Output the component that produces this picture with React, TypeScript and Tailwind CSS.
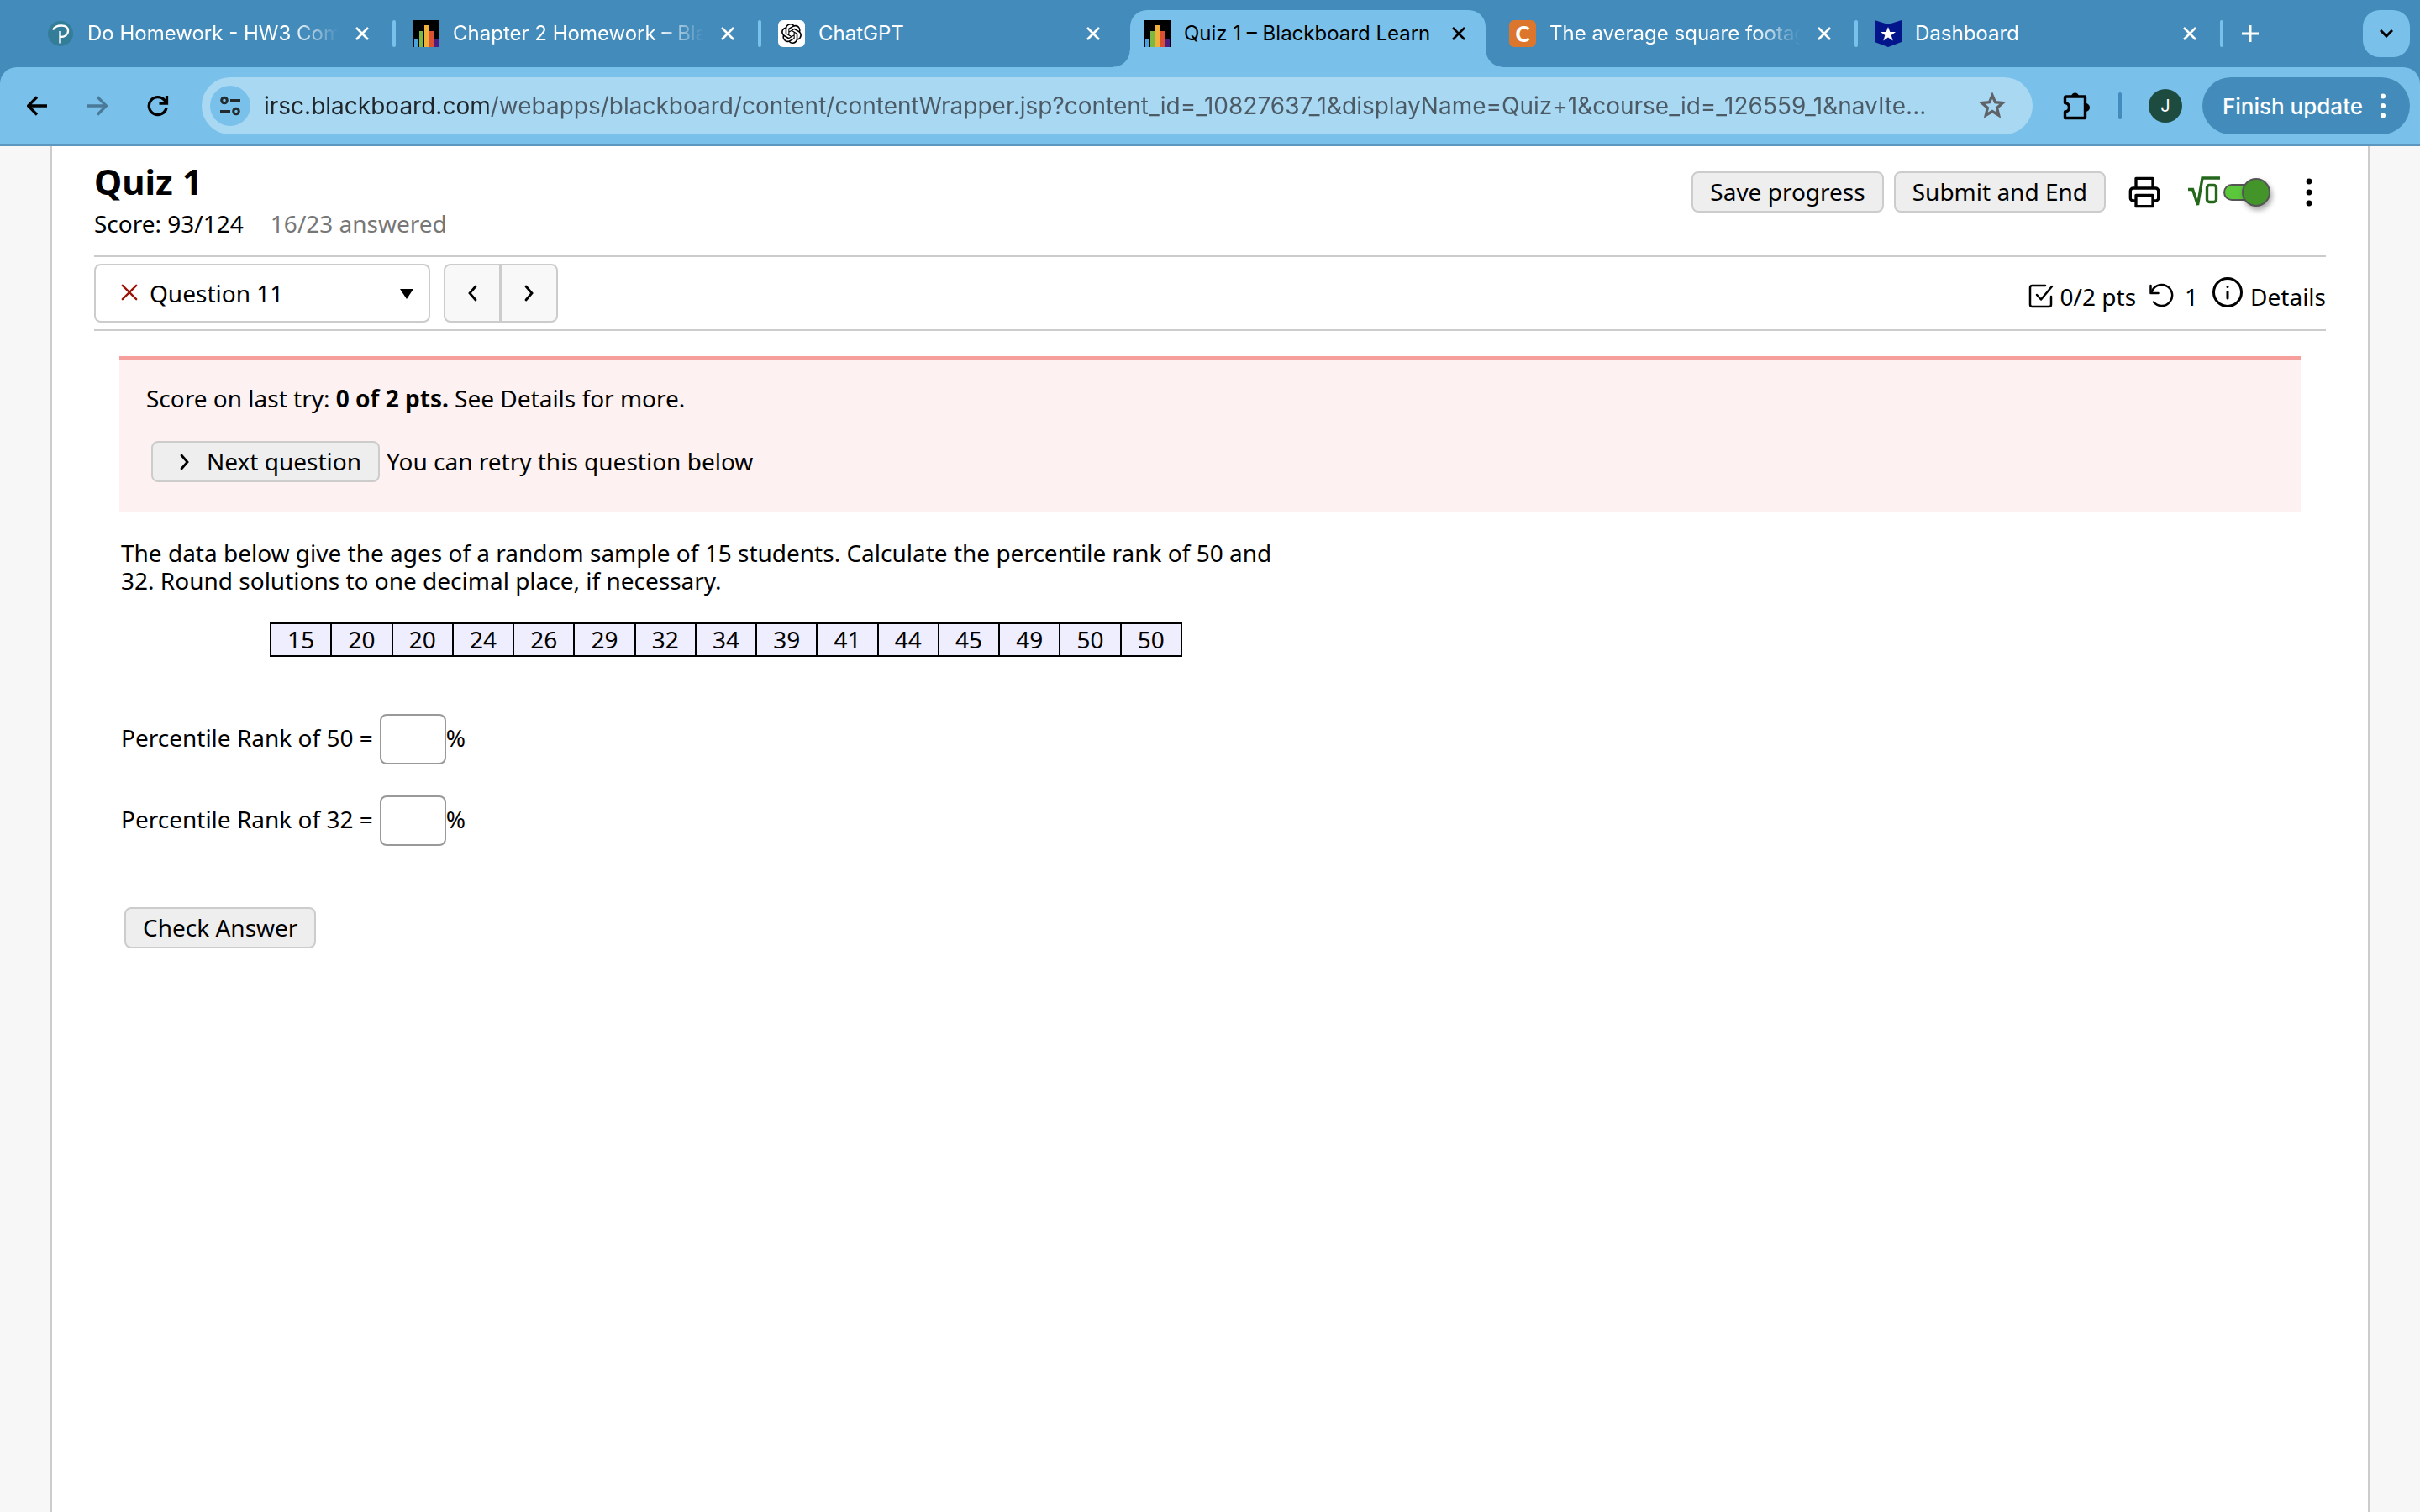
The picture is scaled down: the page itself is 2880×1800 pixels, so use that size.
import React, { useState } from "react";
import { SiOpenai } from "react-icons/si";

/* ---------- favicons ---------- */

function PearsonIcon() {
  return (
    <svg viewBox="0 0 32 32" className="size-8 shrink-0" aria-hidden="true">
      <circle cx="16" cy="16" r="15" fill="#347d99" />
      <path
        d="M7 11.500C9 7.500 13 6.500 17 6.500c5 0 8 2.500 8 6.500s-3.500 7-9.500 7M15.500 13v14.500"
        fill="none"
        stroke="#fff"
        strokeWidth="2.400"
      />
    </svg>
  );
}

function BarsIcon() {
  return (
    <svg viewBox="0 0 32 32" className="size-8 shrink-0" aria-hidden="true">
      <rect width="32" height="32" fill="#000" />
      <rect x="2" y="22" width="5" height="10" fill="#4aa3e0" />
      <rect x="8" y="13" width="5" height="19" fill="#7db942" />
      <rect x="14" y="6" width="5" height="26" fill="#f0b13a" />
      <rect x="20" y="13" width="5" height="19" fill="#dc4f33" />
      <rect x="26" y="22" width="5" height="10" fill="#4c1d80" />
    </svg>
  );
}

function ChatIcon() {
  return (
    <span className="flex size-8 shrink-0 items-center justify-center rounded-md bg-white text-black">
      <SiOpenai className="size-6" />
    </span>
  );
}

function CengageIcon() {
  return (
    <span className="flex size-8 shrink-0 items-center justify-center rounded-md bg-[#dc762c] font-['Lato',sans-serif] text-[26px] leading-8 font-black text-white">
      C
    </span>
  );
}

function StarFlagIcon() {
  return (
    <svg viewBox="0 0 32 32" className="size-8 shrink-0" aria-hidden="true">
      <path d="M0 0l16 5L32 0v26l-16 6L0 26z" fill="#03158b" />
      <path d="M16 8l2.300 6H25l-5.300 4 2 6.500L16 20.600l-5.700 3.900 2-6.500L7 14h6.700z" fill="#fff" />
    </svg>
  );
}

/* ---------- line icons ---------- */

function CloseIcon() {
  return (
    <svg viewBox="0 0 16 16" className="size-4" fill="none" stroke="currentColor" strokeWidth="2.600" aria-hidden="true">
      <path d="M1 1l14 14M15 1L1 15" />
    </svg>
  );
}

function Chevron({ left = false, className = "" }: { left?: boolean; className?: string }) {
  return (
    <svg viewBox="0 0 12 20" className={"h-5 w-3 " + className} fill="none" stroke="currentColor" strokeWidth="2.800" strokeLinecap="round" aria-hidden="true">
      <path d={left ? "M10 2L3 10l7 8" : "M2 2l7 8-7 8"} />
    </svg>
  );
}

function BackIcon({ forward = false }: { forward?: boolean }) {
  return (
    <svg viewBox="0 0 24 24" className="size-6" fill="none" stroke="currentColor" strokeWidth="3.300" aria-hidden="true">
      <path d={forward ? "M0 12h22M12 1.500L22.500 12 12 22.500" : "M24 12H2M12 1.500L1.500 12 12 22.500"} />
    </svg>
  );
}

function ReloadIcon() {
  return (
    <svg viewBox="0 0 26 26" className="size-[26px]" fill="none" stroke="currentColor" strokeWidth="3.300" aria-hidden="true">
      <path d="M23 15.500A10.500 10.500 0 1 1 21 6.500L23 9M23.500 1v9H14.500" />
    </svg>
  );
}

function SiteInfoIcon() {
  return (
    <svg viewBox="0 0 24 24" className="size-6" fill="none" stroke="#222a2e" strokeWidth="3" aria-hidden="true">
      <circle cx="5" cy="5.500" r="3.300" />
      <path d="M12 5.500h12M0 18.500h12" />
      <circle cx="19" cy="18.500" r="3.300" />
    </svg>
  );
}

function StarIcon() {
  return (
    <svg viewBox="0 0 40 40" className="size-10" fill="none" stroke="currentColor" strokeWidth="3.300" aria-hidden="true">
      <path d="M20 7.500l3.500 8.200 8.900.8-6.800 5.900 2.100 8.800-7.700-4.700-7.700 4.700 2.100-8.800-6.800-5.900 8.900-.8z" />
    </svg>
  );
}

function PuzzleIcon() {
  return (
    <svg viewBox="0 0 34 34" className="size-[34px]" aria-hidden="true">
      <path
        d="M4 6h22.500v25.500H2.500V24c3 0 5-2 5-5s-2-5.500-5-5.500V7.500A1.500 1.500 0 0 1 4 6z"
        fill="none"
        stroke="#000"
        strokeWidth="3.400"
        strokeLinejoin="round"
      />
      <path d="M10 6a4.500 4.500 0 0 1 9 0zM27 14a4.800 4.800 0 0 1 0 10z" fill="#000" />
    </svg>
  );
}

function Dots({ className }: { className: string }) {
  return (
    <svg viewBox="0 0 8 34" className={className} fill="currentColor" aria-hidden="true">
      <circle cx="4" cy="4" r="3.400" />
      <circle cx="4" cy="17" r="3.400" />
      <circle cx="4" cy="30" r="3.400" />
    </svg>
  );
}

function PrinterIcon() {
  return (
    <svg viewBox="0 0 24 24" className="size-10" fill="none" stroke="currentColor" strokeWidth="2" strokeLinejoin="round" aria-hidden="true">
      <path d="M6 9V2h12v7" />
      <path d="M6 18H4a2 2 0 0 1-2-2v-5a2 2 0 0 1 2-2h16a2 2 0 0 1 2 2v5a2 2 0 0 1-2 2h-2" />
      <path d="M6 14h12v8H6z" />
    </svg>
  );
}

function RootIcon() {
  return (
    <svg viewBox="0 0 38 38" className="size-[38px]" fill="none" stroke="#25681c" strokeWidth="3.400" aria-hidden="true">
      <path d="M0 15.500h5.500L11.500 34 17 2h21" />
      <rect x="22.500" y="10.500" width="11" height="20" rx="3" />
    </svg>
  );
}

function CheckBoxIcon() {
  return (
    <svg viewBox="0 0 30 30" className="size-[30px]" fill="none" stroke="currentColor" strokeWidth="2.500" strokeLinecap="round" strokeLinejoin="round" aria-hidden="true">
      <path d="M20 3H4.500A2.500 2.500 0 0 0 2 5.500v20A2.500 2.500 0 0 0 4.500 28h20a2.500 2.500 0 0 0 2.500-2.500V16" />
      <path d="M10 14l5 5.500L28 4" />
    </svg>
  );
}

function RetryIcon() {
  return (
    <svg viewBox="0 0 30 30" className="size-[30px]" fill="none" stroke="currentColor" strokeWidth="2.500" strokeLinecap="round" strokeLinejoin="round" aria-hidden="true">
      <path d="M1.500 3v9h9" />
      <path d="M2.500 11.500A12.500 12.500 0 1 1 5 22.500" />
    </svg>
  );
}

function InfoIcon() {
  return (
    <svg viewBox="0 0 38 38" className="size-[38px]" fill="none" stroke="currentColor" strokeWidth="3" strokeLinecap="round" aria-hidden="true">
      <circle cx="19" cy="19" r="16.500" />
      <path d="M19 18.500v7.500M19 12.500v0" />
    </svg>
  );
}

/* ---------- browser chrome ---------- */

type TabData = { title: string; icon: React.ReactNode; active?: boolean; cut?: boolean };

const tabs: TabData[] = [
  { title: "Do Homework - HW3 Com", icon: <PearsonIcon />, cut: true },
  { title: "Chapter 2 Homework – Bla", icon: <BarsIcon />, cut: true },
  { title: "ChatGPT", icon: <ChatIcon /> },
  { title: "Quiz 1 – Blackboard Learn", icon: <BarsIcon />, active: true },
  { title: "The average square footag", icon: <CengageIcon />, cut: true },
  { title: "Dashboard", icon: <StarFlagIcon /> },
];

function Tab({ tab, divider }: { tab: TabData; divider: boolean }) {
  return (
    <div className="flex max-w-[435px] min-w-0 flex-1 items-end">
      <div
        className={
          "relative mx-1 flex h-[68px] min-w-0 flex-1 items-center pr-4 pb-3 pl-4 " +
          (tab.active ? "rounded-t-[20px] bg-[#79c1eb] text-black" : "text-white")
        }
      >
        {tab.active && (
          <>
            <span className="absolute bottom-0 -left-5 size-5 bg-[radial-gradient(circle_at_0_0,transparent_19px,#79c1eb_20px)]" />
            <span className="absolute -right-5 bottom-0 size-5 bg-[radial-gradient(circle_at_100%_0,transparent_19px,#79c1eb_20px)]" />
          </>
        )}
        {tab.icon}
        <span
          className={
            "ml-4 min-w-0 flex-1 overflow-hidden text-2xl whitespace-nowrap " +
            (tab.cut ? "[mask-image:linear-gradient(90deg,#000_calc(100%-56px),transparent)]" : "")
          }
        >
          {tab.title}
        </span>
        <button type="button" aria-label="Close tab" className="ml-3 flex size-8 shrink-0 items-center justify-center">
          <CloseIcon />
        </button>
      </div>
      <span className={"mb-6 h-8 w-1 shrink-0 rounded-sm " + (divider ? "bg-[#79c1eb]" : "")} />
    </div>
  );
}

function TabStrip() {
  return (
    <div className="flex h-20 items-end bg-[#438bbb] pr-3 pl-9">
      {tabs.map((tab, i) => (
        <Tab key={tab.title} tab={tab} divider={!tab.active && !tabs[i + 1]?.active} />
      ))}
      <button type="button" aria-label="New tab" className="mb-6 ml-4 flex size-8 shrink-0 items-center justify-center text-white">
        <svg viewBox="0 0 20 20" className="size-5" fill="none" stroke="currentColor" strokeWidth="3" aria-hidden="true">
          <path d="M10 0v20M0 10h20" />
        </svg>
      </button>
      <button type="button" aria-label="Search tabs" className="mb-3 ml-auto flex size-14 shrink-0 items-center justify-center rounded-[20px] bg-[#79c1eb]">
        <svg viewBox="0 0 16 10" className="h-[10px] w-4" fill="none" stroke="#000" strokeWidth="3" aria-hidden="true">
          <path d="M1 1l7 7 7-7" />
        </svg>
      </button>
    </div>
  );
}

function Toolbar() {
  return (
    <div className="border-b-2 border-[#5d97bd] bg-[#438bbb]">
      <div className="flex h-[92px] items-center rounded-t-[20px] bg-[#79c1eb] pr-3 pl-5">
        <button type="button" aria-label="Back" className="flex size-12 items-center justify-center">
          <BackIcon />
        </button>
        <button type="button" aria-label="Forward" className="ml-6 flex size-12 items-center justify-center text-[#4a7a98]">
          <BackIcon forward />
        </button>
        <button type="button" aria-label="Reload" className="ml-6 flex size-12 items-center justify-center">
          <ReloadIcon />
        </button>
        <div className="ml-7 flex h-[68px] min-w-0 flex-1 items-center rounded-full bg-[#a9d8f3] pr-7 pl-[10px]">
          <button type="button" aria-label="Site information" className="flex size-12 shrink-0 items-center justify-center rounded-full bg-[#79c1eb]">
            <SiteInfoIcon />
          </button>
          <input
            type="text"
            aria-label="Address"
            readOnly
            value="irsc.blackboard.com/webapps/blackboard/content/contentWrapper.jsp?content_id=_10827637_1&displayName=Quiz+1&course_id=_126559_1&navIte..."
            className="ml-4 min-w-0 flex-1 bg-[linear-gradient(90deg,#1f2529_270px,#4b5a64_270px)] bg-clip-text text-[28px] leading-9 text-transparent outline-none"
          />
          <button type="button" aria-label="Bookmark this tab" className="ml-4 flex shrink-0 items-center justify-center text-[#5f6368]">
            <StarIcon />
          </button>
        </div>
        <button type="button" aria-label="Extensions" className="ml-9 shrink-0">
          <PuzzleIcon />
        </button>
        <span className="ml-8 h-8 w-1 rounded-sm bg-[#438bbb]" />
        <button type="button" className="ml-8 flex size-10 shrink-0 items-center justify-center rounded-full bg-[#1e4b40] text-xl text-white">
          J
        </button>
        <button type="button" className="ml-6 flex h-[68px] shrink-0 items-center rounded-full bg-[#438bbb] pr-7 pl-6 text-[26px] font-medium text-white">
          Finish update
          <Dots className="ml-5 h-[30px] w-2" />
        </button>
      </div>
    </div>
  );
}

/* ---------- quiz ---------- */

const grayButton = "rounded-lg border-2 border-[#ccc] bg-[#eee] px-5 py-[6px]";

function Header() {
  return (
    <header className="flex items-start justify-between border-b-2 border-[#ccc] pt-3 pb-[22px]">
      <div>
        <h1 className="text-[42px] leading-[60px] font-bold">Quiz 1</h1>
        <p className="mt-1 flex gap-8 leading-8">
          <span>Score: 93/124</span>
          <span className="text-[#777]">16/23 answered</span>
        </p>
      </div>
      <div className="flex items-center pt-[18px]">
        <button type="button" className={grayButton}>Save progress</button>
        <button type="button" className={grayButton + " ml-3"}>Submit and End</button>
        <button type="button" aria-label="Print" className="ml-[26px]">
          <PrinterIcon />
        </button>
        <span className="ml-8">
          <RootIcon />
        </span>
        <label className="relative ml-1 flex h-9 w-14 items-center">
          <input type="checkbox" defaultChecked aria-label="Equation editor" className="peer sr-only" />
          <span className="h-5 w-10 rounded-full border-2 border-[#555] bg-[#5bc83b]" />
          <span className="absolute right-0 size-[34px] rounded-full border-2 border-[#555] bg-[#439529] shadow-[2px_4px_6px_rgba(0,0,0,0.350)]" />
        </label>
        <button type="button" aria-label="More options" className="mr-4 ml-[42px]">
          <Dots className="h-9 w-2" />
        </button>
      </div>
    </header>
  );
}

function QuestionBar() {
  return (
    <div className="flex items-center border-b-2 border-[#ccc] py-2">
      <div className="relative w-[400px]">
        <select aria-label="Question" className="h-[70px] w-full appearance-none rounded-lg border-2 border-[#ccc] bg-white pl-16 text-black">
          <option>Question 11</option>
        </select>
        <svg viewBox="0 0 22 22" className="pointer-events-none absolute top-6 left-8 size-5" fill="none" stroke="#9a1508" strokeWidth="2.600" strokeLinecap="round" aria-hidden="true">
          <path d="M2 2l18 18M20 2L2 20" />
        </svg>
        <svg viewBox="0 0 16 12" className="pointer-events-none absolute top-[30px] right-5 h-3 w-4" aria-hidden="true">
          <path d="M0 0h16L8 12z" fill="#000" />
        </svg>
      </div>
      <button type="button" aria-label="Previous question" className="ml-4 flex h-[70px] w-[68px] items-center justify-center rounded-l-lg border-2 border-[#ccc] bg-[#f8f8f8]">
        <Chevron left />
      </button>
      <button type="button" aria-label="Next question" className="flex h-[70px] w-[68px] items-center justify-center rounded-r-lg border-2 border-[#ccc] bg-[#f8f8f8]">
        <Chevron />
      </button>
      <div className="ml-auto flex items-end self-end pb-[14px]">
        <span className="mb-[3px]"><CheckBoxIcon /></span>
        <span className="ml-2">0/2 pts</span>
        <span className="mb-[3px] ml-4"><RetryIcon /></span>
        <span className="ml-3">1</span>
        <button type="button" className="ml-4 flex items-end">
          <span className="mb-[3px]"><InfoIcon /></span>
          <span className="ml-2">Details</span>
        </button>
      </div>
    </div>
  );
}

function Result() {
  return (
    <section className="mx-[30px] mt-[30px] border-t-4 border-[#f59e9c] bg-[#fdf2f1] px-8 pt-[30px] pb-[35px]">
      <p>
        Score on last try: <b>0 of 2 pts.</b> See Details for more.
      </p>
      <div className="mt-[34px] ml-[6px] flex items-center">
        <button type="button" className={grayButton + " flex items-center"}>
          <Chevron className="mr-5 ml-3" />
          Next question
        </button>
        <span className="ml-2">You can retry this question below</span>
      </div>
    </section>
  );
}

const ages = [15, 20, 20, 24, 26, 29, 32, 34, 39, 41, 44, 45, 49, 50, 50];

function RankField({ rank, className }: { rank: number; className: string }) {
  const [value, setValue] = useState("");
  const id = "rank-" + rank;
  return (
    <div className={"flex items-center " + className}>
      <label htmlFor={id} className="pb-1">Percentile Rank of {rank} =</label>
      <input
        id={id}
        type="text"
        value={value}
        onChange={(e) => setValue(e.target.value)}
        className="ml-2 h-[60px] w-[79px] rounded-lg border-2 border-[#999] bg-white px-2"
      />
      <span className="pb-1">%</span>
    </div>
  );
}

function Question() {
  return (
    <section className="mx-8 mt-[33px]">
      <p className="max-w-[1400px]">
        The data below give the ages of a random sample of 15 students. Calculate the percentile rank of 50 and 32. Round
        solutions to one decimal place, if necessary.
      </p>
      <table className="mt-[33px] ml-[177px] w-[1086px] table-fixed border-collapse text-center">
        <tbody>
          <tr>
            {ages.map((age, i) => (
              <td key={i} className="border-2 border-black bg-[#eeeeff] py-[2px]">
                {age}
              </td>
            ))}
          </tr>
        </tbody>
      </table>
      <RankField rank={50} className="mt-[68px]" />
      <RankField rank={32} className="mt-[37px]" />
      <button type="button" className={grayButton + " mt-[73px] ml-1"}>Check Answer</button>
    </section>
  );
}

export default function App() {
  return (
    <div className="flex min-h-screen flex-col bg-[#f7f7f7]">
      <div className="font-['Inter',sans-serif]">
        <TabStrip />
        <Toolbar />
      </div>
      <main className="mx-[60px] flex-1 border-x-2 border-[#ccc] bg-white px-[50px] font-['Noto_Sans',sans-serif] text-[28px] leading-[33px] text-black">
        <Header />
        <QuestionBar />
        <Result />
        <Question />
      </main>
    </div>
  );
}
